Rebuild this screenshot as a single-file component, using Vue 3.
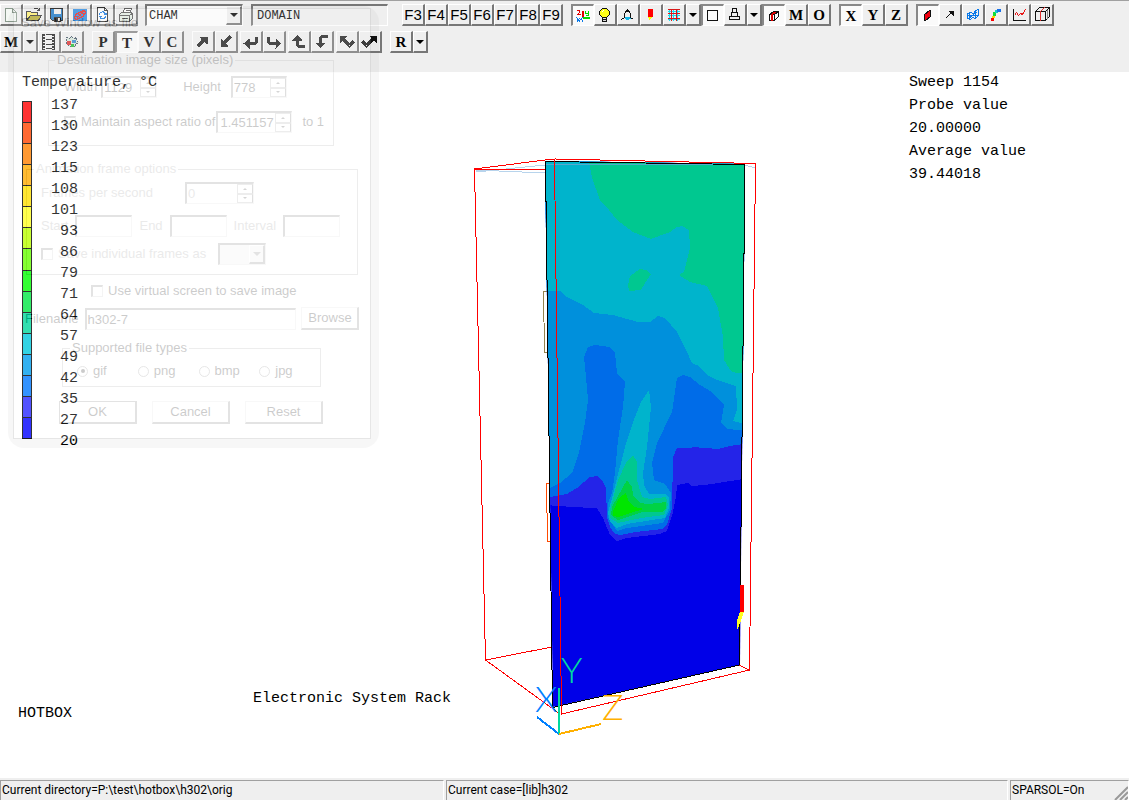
<script setup>
const I = {
  blank: '<path d="M3 2h7l4 4v9H3z" fill="#f4f8f4" stroke="#8a9a8d"/><path d="M10 2v4h4" fill="none" stroke="#8a9a8d"/>',
  open: '<path d="M1 5h4l1 1h6v3H5l-4 5z" fill="#ffef70" stroke="#333"/><path d="M5 9h11l-3 5H1z" fill="#b5aa30" stroke="#333"/><path d="M8 3c2-2 4-2 6 1M14 1v3h-3" fill="none" stroke="#333"/>',
  save: '<path d="M2 2h12v12H4l-2-2z" fill="#1b78c8" stroke="#222"/><path d="M5 2h7v5H5z" fill="#eee"/><path d="M5 10h7v5H5z" fill="#222"/><path d="M9 11h2v3H9z" fill="#eee"/>',
  image: '<path d="M1 2h14v12H1z" fill="#2d8be0"/><path d="M3 12l1-4 8-4 2 1-1 4-8 4zM4 9l3 2M6 7l4 3M9 6l4 2M5 12l7-7" fill="none" stroke="#e02828"/>',
  refresh: '<path d="M3 1h7l3 3v11H3z" fill="#fff" stroke="#333"/><path d="M10 1v3h3" fill="none" stroke="#333"/><path d="M5 8c0-3 5-4 6 0M11 9c0 4-5 4-6 1M9 8h3V6M4 10h3" fill="none" stroke="#1878e0"/>',
  print: '<path d="M5 7l2-5h7l-2 5" fill="#fff" stroke="#555"/><path d="M2 8l2-2h10l1 2v4l-3 3H2z" fill="#e4eee4" stroke="#555"/><path d="M2 9h10v6M12 9l3-2M4 12h6M8 4h4" fill="none" stroke="#555"/>',
  axes: '<path d="M2 3h3v2L3 7h3" fill="none" stroke="#e00000"/><path d="M8 3v7" stroke="#e00000" stroke-width="2"/><path d="M8 10h7" stroke="#00d800" stroke-width="2"/><path d="M11 3v3h3M14 3v5h-3" fill="none" stroke="#00d800"/><path d="M8 10l-4 4M2 10l4 5M2 15l3-4M7 12l2 3" fill="none" stroke="#0878e8"/>',
  bulb: '<path d="M6 2h4l3 3v3l-3 3H6L3 8V5z" fill="#ffff18" stroke="#111"/><path d="M6 11h4v4H6zM6 13h4" fill="#ddd" stroke="#111"/><path d="M5 6l2-2" stroke="#fff"/>',
  probeview: '<path d="M8 2v3M8 3L5 7v4l-3 2M8 3l3 4v4l3 2" fill="none" stroke="#111"/><path d="M6 10h4l1 2-3 2-3-2z" fill="#18b8e8"/>',
  probe: '<path d="M5 2h5v8H5z" fill="#f00"/><path d="M5 10h5l-3 3z" fill="#ff0"/>',
  grid: '<path d="M2 5h12M2 9h12M2 13h12M4 2v12M8 2v12M12 2v12" stroke="#18dff0" fill="none"/><path d="M2 3h12M2 7h12M2 12h12M6 2v12M11 2v12" stroke="#d81818" fill="none"/>',
  square: '<path d="M3 3h10v10H3z" fill="none" stroke="#111"/>',
  camera: '<path d="M6 2h4v4H6zM5 6h6v4H5zM3 10h10v3H3z" fill="none" stroke="#111"/>',
  cube: '<path d="M4 7l4-3h5v5l-4 4H4zM4 7h5v6M9 7l4-3" fill="none" stroke="#111"/><path d="M6 13V7l4-3M7 13V7l4-3" fill="none" stroke="#e00000"/>',
  slice: '<path d="M5 7l5-4h1v6l-5 4H5z" fill="#f00010" stroke="#111"/>',
  vector: '<path d="M4 12l6-6" stroke="#111"/><path d="M6 4h6v6l-2-2z" fill="#111"/>',
  iso: '<path d="M3 7l3-1 3 1 2-3 3-1v6l-3 3-3-1-2 2-3-1zM3 9h11M5 6v7M8 7l4 4M11 4v8M4 12l9-7" fill="none" stroke="#0878e8"/>',
  stream: '<path d="M3 14h3v-3H3z" fill="#f00"/><path d="M4 11h3V9H4z" fill="#ffd000"/><path d="M5 9h3V5H5z" fill="#12dc35"/><path d="M7 6h3V3H7z" fill="#10ccc8"/><path d="M9 2h4v3H9z" fill="#1870e8"/>',
  graph: '<path d="M3 2v12h12" fill="none" stroke="#111"/><path d="M4 9l2-3 2 3 2-2 2 1 3-5" fill="none" stroke="#e81818"/>',
  box: '<path d="M2 5l4-4h10v9l-4 4H2zM2 5h10v9M12 5l4-4" fill="none" stroke="#111"/><path d="M7 14V5l4-4" fill="none" stroke="#e03030"/><path d="M14 3v9" stroke="#888"/>',
  film: '<path d="M3 0v16M13 0v16" stroke="#222" stroke-width="3" stroke-dasharray="2 1"/><path d="M2 0v16M14 0v16M5 1h6M5 6h6M5 11h6M5 15h6" stroke="#222"/>',
  anim: '<path d="M3 4l3 1 2-2 3 2 2-1v3l2 2-3 2v2H6l-3-3z" fill="#d7e6da" stroke="#456" stroke-dasharray="2 1"/><path d="M3 7h4v4H3z" fill="#d33"/><path d="M8 6h4v3H8z" fill="#38c"/><path d="M7 10h3v3H7z" fill="#2b3"/>',
  ne: '<path d="M3 13l7-7" stroke="#222" stroke-width="3"/><path d="M5 3h8v8l-3-2-3-3z" fill="#222"/>',
  sw: '<path d="M13 3l-7 7" stroke="#222" stroke-width="3"/><path d="M3 5v8h8l-2-3z" fill="#222"/>',
  left: '<path d="M14 3v4q0 3-3 3H5" fill="none" stroke="#222" stroke-width="3"/><path d="M1 10l6-5v10z" fill="#222"/>',
  right: '<path d="M3 3v4q0 3 3 3h6" fill="none" stroke="#222" stroke-width="3"/><path d="M16 10l-6-5v10z" fill="#222"/>',
  up: '<path d="M7 5v6q0 2 3 2h4" fill="none" stroke="#222" stroke-width="3"/><path d="M7 1l5 6H2z" fill="#222"/>',
  down: '<path d="M14 3h-4q-3 0-3 3v5" fill="none" stroke="#222" stroke-width="3"/><path d="M7 15l5-6H2z" fill="#222"/>',
  nw: '<path d="M4 5l7 7 4-4" fill="none" stroke="#222" stroke-width="3"/><path d="M1 2h8L1 10z" fill="#222"/>',
  neb: '<path d="M1 8l4 4 7-7" fill="none" stroke="#111" stroke-width="3"/><path d="M7 2h8v8z" fill="#111"/>',
}
const icon = (k, label, down) => ({ k, label, down })
const text = (t, down, thin) => ({ t, label: t, down, thin })
const drop = (label) => ({ drop: true, label })

const fileTools = [icon('blank', 'New'), icon('open', 'Open'), icon('save', 'Save'), icon('image', 'Save window'), icon('refresh', 'Reload'), icon('print', 'Print')]
const topGroups = [
  ['F3', 'F4', 'F5', 'F6', 'F7', 'F8', 'F9'].map((t) => text(t, false, true)),
  [icon('axes', 'Axes', true), icon('bulb', 'Light'), icon('probeview', 'View'), icon('probe', 'Probe'), icon('grid', 'Grid'), drop('Grid options'), icon('square', 'Frame', true), icon('camera', 'Objects'), drop('Object options'), icon('cube', 'Domain', true), text('M'), text('O')],
  [text('X', true), text('Y'), text('Z')],
  [icon('slice', 'Contours', true), icon('vector', 'Vectors'), icon('iso', 'Surface'), icon('stream', 'Streamlines'), icon('graph', 'Graph'), icon('box', 'Slice')],
]
const lowGroups = [
  [text('M'), drop('Macro options'), icon('film', 'Film'), icon('anim', 'Animate')],
  [text('P'), text('T', true), text('V'), text('C')],
  [icon('ne', 'Away'), icon('sw', 'Towards')],
  [icon('left', 'Turn left'), icon('right', 'Turn right')],
  [icon('up', 'Tilt up'), icon('down', 'Tilt down')],
  [icon('nw', 'Roll left'), icon('neb', 'Roll right')],
  [text('R'), drop('Reset options')],
]
const levels = [137, 130, 123, 115, 108, 101, 93, 86, 79, 71, 64, 57, 49, 42, 35, 27, 20]
const colours = ['#ff0000', '#ff4400', '#ff8000', '#ffaa00', '#ffe000', '#ffff22', '#bbff00', '#66ff00', '#00ff00', '#00e844', '#00d89c', '#00c8dc', '#009eee', '#0078ff', '#2828ff', '#0000ff']
const types = ['gif', 'png', 'bmp', 'jpg']
</script>

<template>
  <div class="app">
    <header class="toolbar">
      <div class="row">
        <div class="group">
          <button v-for="b in fileTools" :key="b.k" class="tool" :aria-label="b.label"><svg class="ico" viewBox="-0.5 -0.5 18 17" v-html="I[b.k]"></svg></button>
        </div>
        <div class="combo">
          <select aria-label="Model"><option>CHAM</option></select>
          <span class="arrowbox"><i class="tri"></i></span>
        </div>
        <input class="domain" aria-label="Object" value="DOMAIN" />
        <div v-for="(g, i) in topGroups" :key="i" class="group">
          <button v-for="b in g" :key="b.label" class="tool" :class="{ drop: b.drop, down: b.down, thin: b.thin }" :aria-label="b.label">
            <i v-if="b.drop" class="tri"></i>
            <template v-else-if="b.t">{{ b.t }}</template>
            <svg v-else class="ico" viewBox="-0.5 -0.5 18 17" v-html="I[b.k]"></svg>
          </button>
        </div>
      </div>
      <div class="row low">
        <div v-for="(g, i) in lowGroups" :key="i" class="group">
          <button v-for="b in g" :key="b.label" class="tool" :class="{ drop: b.drop, down: b.down }" :aria-label="b.label">
            <i v-if="b.drop" class="tri"></i>
            <template v-else-if="b.t">{{ b.t }}</template>
            <svg v-else class="ico" viewBox="-0.5 -0.5 18 17" v-html="I[b.k]"></svg>
          </button>
        </div>
      </div>
    </header>

    <main class="view">
      <section class="side">
        <div class="key-title">Temperature, °C</div>
        <div class="key">
          <div class="bar"><span v-for="c in colours" :key="c" :style="{ background: c }"></span></div>
          <ol class="levels"><li v-for="n in levels" :key="n">{{ n }}</li></ol>
        </div>
        <div class="caption">Electronic System Rack</div>
        <div class="case">HOTBOX</div>
      </section>

      <svg class="plot" viewBox="460 150 310 600" role="img" aria-label="Temperature contours">
        <defs><clipPath id="slice"><path d="M545 161L745 164L740 665L553 707z" /></clipPath></defs>
        <g fill="none" shape-rendering="crispEdges">
          <path d="M476 172L545 165M476 170L545 173" stroke="#b8d4ec" />
          <path d="M474.500 169L545 160M474.500 169H545M474.500 169L485.500 660L552 647M485.500 660L560 714" stroke="#f00" />
          <path d="M549 291H543.500L544.500 352H548" stroke="#94824e" />
          <path d="M550 483H546.500L547.500 541H551" stroke="#ff4a00" />
        </g>
        <g clip-path="url(#slice)" shape-rendering="crispEdges">
          <path fill="#0000e8" d="M540 150h220v570H540z" />
          <path fill="#2424e8" d="M540 150V505L563 506 569 507 597 508 603 518 610 535 617 541 627 538 660 534 667 531 673 512 676 497 677 485 688 483 691 486 705 485 750 478V150z" />
          <path fill="#006ce8" d="M540 150V499L567 494 577 488 590 477 597 476 603 482 606 488 607 517 610 527 615 534 620 535 635 532 662 529 667 525 672 508 673 457 677 448 690 448 693 447 718 449 730 446 750 443V150z" />
          <path fill="#0090dc" d="M540 150V490L550 488 560 483 572 473 579 453 585 423 588 400 586 377 584 357 588 347 595 345 610 347 615 353 617 373 625 382 623 407 618 440 615 473 612 493 608 503 608 517 617 531 627 528 663 523 670 510 671 493 665 484 654 480 652 463 657 443 672 412 677 378 683 375 690 377 700 385 712 392 724 405 721 423 727 429 750 431V150z" />
          <path fill="#00b4cc" d="M540 150V291H561L565 296 583 305 594 313 613 315 638 322H650L658 316 665 318 677 332 686 350 692 363 699 366 707 375 717 380 736 386 737 410 733 421 750 425V150zM649 390L651 407 647 447 643 473 644 485 649 494H665L669 498V508L665 518 627 524 617 528 610 522 608 513 614 490 625 447 633 422 641 402z" />
          <path fill="#00c890" d="M589 150V162L592 178 600 200 609 210 617 220 633 232 651 239 670 232 677 227 682 226 689 230 690 248 684 272 679 275 690 282 707 286 718 308 723 337 724 360 731 371 736 373H750V150zM630 276L640 269 646 270 651 274 645 283 641 290 629 291 628 285zM633 455L637 462V480L642 497 650 499 666 497 668 505 664 515 641 518 618 523 610 518V510L618 480 626 463z" />
          <path fill="#00d244" d="M627 480L632 487 633 495 640 503 648 504 666 502V508L662 512 643 512 618 520 611 515 612 507z" />
          <path fill="#00e600" d="M626 493L628 500 634 507 644 509 627 514 618 517 613 516V511L619 498z" />
          <path d="M545 164H745" stroke="#58a7cd" />
        </g>
        <g fill="none" shape-rendering="crispEdges">
          <path d="M545.500 161.500L745 164.500 739.500 665 552.500 707.500z" stroke="#000" />
          <path d="M745 165L755 168" stroke="#b8d4ec" />
          <path d="M545 160L555 159 755.500 163.500 749.500 670 561.500 714 554.500 160M739 665L749 670" stroke="#f00" />
          <path d="M742 585V612" stroke="#f00" stroke-width="4" />
          <path d="M740 612h4l-3 9-4 9v-9z" fill="#ffff20" />
          <path d="M537 717L559 734" stroke="#0080ff" stroke-width="2" />
          <path d="M559 688V734" stroke="#00d8a0" stroke-width="2" />
          <path d="M559 734L601 724" stroke="#ffb000" stroke-width="2" />
        </g>
        <g class="axis">
          <text x="535" y="712" fill="#0080ff">X</text>
          <text x="561" y="683" fill="#00d8a0">Y</text>
          <text x="602" y="720" fill="#ffb000">Z</text>
        </g>
      </svg>

      <section class="info">
        <div>Sweep 1154</div><div>Probe value</div><div>20.00000</div><div>Average value</div><div>39.44018</div>
      </section>
    </main>

    <footer class="status">
      <div class="cell path">Current directory=P:\test\hotbox\h302\orig</div>
      <div class="cell name">Current case=[lib]h302</div>
      <div class="cell solver">SPARSOL=On<svg class="grip" viewBox="0 0 14 14"><path d="M1 14L14 1M6 14L14 6M11 14L14 11" stroke="#999" stroke-width="2" /></svg></div>
    </footer>

    <form class="dialog" @submit.prevent>
      <div class="window">
        <h2>Save Window as file</h2>
        <fieldset class="dest">
          <legend>Destination image size (pixels)</legend>
          <div class="line">
            <label for="w">Width</label><span class="spin sw"><input id="w" value="1129" /><b><i></i><i></i></b></span>
            <label for="h" class="height">Height</label><span class="spin sw"><input id="h" value="778" /><b><i></i><i></i></b></span>
          </div>
          <div class="line second">
            <input id="ar" class="check" type="checkbox" checked /><label for="ar">Maintain aspect ratio of</label>
            <span class="spin ratio"><input aria-label="Aspect ratio" value="1.451157" /><b><i></i><i></i></b></span><span class="to">to 1</span>
          </div>
        </fieldset>
        <fieldset class="anim">
          <legend>Animation frame options</legend>
          <div class="line"><label for="fps" class="fps">Frames per second</label><span class="spin fp"><input id="fps" value="0" /><b><i></i><i></i></b></span></div>
          <div class="line range">
            <label for="st">Start</label><input id="st" class="box" /><label for="en">End</label><input id="en" class="box" /><label for="iv">Interval</label><input id="iv" class="box" />
          </div>
          <div class="line frames"><input id="sv" class="check" type="checkbox" /><label for="sv">Save individual frames as</label>
            <span class="mini"><select aria-label="Frame type"><option></option></select><span class="arrowbox"><i class="tri"></i></span></span></div>
        </fieldset>
        <div class="line virtual"><input id="vs" class="check" type="checkbox" /><label for="vs">Use virtual screen to save image</label></div>
        <div class="line file"><label for="fn">Filename</label><input id="fn" class="box" value="h302-7" /><button>Browse</button></div>
        <fieldset class="types">
          <legend>Supported file types</legend>
          <div class="line"><label v-for="(t, i) in types" :key="t"><input class="radio" type="radio" name="type" :checked="i === 0" />{{ t }}</label></div>
        </fieldset>
        <div class="line actions"><button class="ok">OK</button><button>Cancel</button><button>Reset</button></div>
      </div>
    </form>
  </div>
</template>

<style>
body { margin: 0; background: #fff; }
</style>

<style scoped>
* { box-sizing: border-box; }
.app { position: relative; min-height: 100vh; display: flex; flex-direction: column; overflow: hidden; color: #000; font-family: "Liberation Sans", sans-serif; }
button, input, select { font: inherit; color: inherit; border-radius: 0; appearance: none; margin: 0; padding: 0; }
.toolbar { background: #efefef; border-top: 1px solid #a0a0a0; height: 72px; padding-top: 3px; flex: none; }
.row { display: flex; height: 22px; gap: 8px; }
.row.low { margin-top: 5px; gap: 2px; }
.row.low .group:nth-child(-n+2), .row.low .group:nth-child(6) { margin-right: 6px; }
.group { display: flex; flex: none; }
.tool { width: 23px; height: 22px; display: flex; align-items: center; justify-content: center; background: #efefef; border: solid; border-width: 1px 2px 2px 1px; border-color: #fff #777 #777 #fff; font: bold 15px "Liberation Serif", serif; line-height: 18px; }
.tool.thin { font: 15px "Liberation Sans", sans-serif; line-height: 18px; }
.tool.down { background: #fafafa; border-width: 2px 1px 1px 2px; border-color: #888 #fff #fff #888; }
.tool.drop { width: 15px; }
.ico { width: 18px; height: 17px; flex: none; shape-rendering: crispEdges; }
.tri { width: 0; height: 0; flex: none; border: 4px solid transparent; border-top-color: #000; border-bottom: 0; }
.combo { position: relative; width: 98px; margin-left: -1px; flex: none; }
.combo select, .domain { height: 22px; border: solid; border-width: 2px 1px 1px 2px; border-color: #777 #fff #fff #777; font: 12px "Liberation Mono", monospace; }
.combo select { width: 98px; padding-left: 2px; background: #fff; }
.arrowbox { position: absolute; right: 1px; top: 2px; bottom: 1px; width: 16px; display: flex; align-items: center; justify-content: center; background: #efefef; border: solid; border-width: 1px 2px 2px 1px; border-color: #fff #777 #777 #fff; pointer-events: none; }
.domain { width: 137px; padding-left: 4px; margin-right: 6px; background: #efefef; flex: none; }

.view { flex: 1; display: flex; background: #fff; font: 15px/24px "Liberation Mono", monospace; }
.side { width: 460px; flex: none; display: flex; flex-direction: column; }
.key-title { padding-left: 22px; line-height: 22px; }
.key { display: flex; padding-left: 22px; }
.bar { width: 10px; height: 338px; margin-top: 7px; border: 1px solid #000; display: flex; flex-direction: column; }
.bar span { flex: 1; border-bottom: 1px solid #000; }
.bar span:last-child { border-bottom: 0; }
.levels { list-style: none; margin: 1px 0 0; padding: 0; width: 46px; text-align: right; line-height: 21px; }
.caption { margin-top: auto; padding-right: 9px; text-align: right; line-height: 15px; }
.case { padding-left: 18px; line-height: 15px; margin-bottom: 57px; }
.plot { width: 310px; height: 600px; margin-top: 78px; flex: none; }
.axis { font: 300 36px Lato, sans-serif; }
.info { margin-left: 139px; margin-top: -1px; line-height: 23px; white-space: nowrap; }

.status { height: 22px; flex: none; display: flex; gap: 2px; background: #efefef; padding-top: 2px; font: 12px/18px Roboto, sans-serif; }
.cell { border: solid; border-width: 1px 1px 0 1px; border-color: #a0a0a0 #fff #fff #a0a0a0; padding-left: 1px; white-space: nowrap; position: relative; }
.path { width: 444px; }
.name { flex: 1; }
.solver { width: 119px; }
.grip { position: absolute; right: 0; bottom: 0; width: 14px; height: 14px; }

.dialog { position: absolute; left: 8px; top: 6px; width: 371px; height: 442px; padding: 2px 8px 9px 5px; border-radius: 16px; opacity: 0.2; box-shadow: inset 0 0 0 11px rgba(0, 0, 0, 0.15); font-size: 13px; line-height: 16px; pointer-events: none; }
.window { height: 431px; border: 1px solid #888; background: linear-gradient(#efefef 64px, #fff 64px); display: flow-root; }
h2 { margin: 6px 0 21px 7px; font-size: 13px; line-height: 16px; font-weight: 400; }
fieldset { margin: 0; padding: 0; min-width: 0; border: 1px solid #aaa; }
legend { padding: 0 2px; margin-left: 7px; }
.line { display: flex; align-items: center; }
.dest { margin-left: 34px; width: 286px; height: 94px; }
.dest legend { margin-left: 6px; }
.dest .line { padding-left: 15px; margin-top: 8px; }
.dest .line.second { margin-top: 13px; }
.spin { display: flex; height: 22px; border: solid; border-width: 2px 1px 1px 2px; border-color: #777 #ddd #ddd #777; }
.spin input { border: 0; background: none; width: 0; flex: 1; padding-left: 1px; outline: 0; }
.spin b { width: 16px; display: flex; flex-direction: column; }
.spin i { flex: 1; border: 1px solid #aaa; border-right-color: #666; display: flex; align-items: center; justify-content: center; }
.spin i::after { content: ""; border: 2px solid transparent; border-top: 0; border-bottom-color: #333; }
.spin i + i::after { transform: rotate(180deg); }
.sw { width: 56px; margin-left: 4px; }
.height { margin-left: 26px; }
.height + .sw { margin-left: 10px; }
.check { width: 12px; height: 12px; border: solid; border-width: 2px 1px 1px 2px; border-color: #777 #ccc #ccc #777; margin-right: 5px; }
.check:checked::after { content: "✓"; display: block; font-size: 10px; line-height: 9px; }
.ratio { width: 76px; margin-left: 1px; }
.ratio input { padding-left: 2px; }
.to { margin-left: 10px; }
.anim { margin: 15px 0 0 12px; width: 332px; height: 114px; color: #999; }
.anim .line { padding-left: 14px; margin-top: 5px; }
.anim .range { margin-top: 11px; gap: 7px; }
.range .box { width: 57px; }
.box { height: 22px; border: solid; border-width: 2px 1px 1px 2px; border-color: #777 #ddd #ddd #777; background: #fff; }
.anim .frames { margin-top: 6px; }
.fps { width: 144px; }
.fp { width: 69px; }
.mini { position: relative; margin-left: 12px; }
.mini select { display: block; width: 48px; height: 22px; border: solid; border-width: 2px 1px 1px 2px; border-color: #777 #ddd #ddd #777; }
.mini .tri { border-top-color: #777; }
.virtual { margin: 8px 0 0 77px; }
.file { margin: 8px 0 0 11px; }
.file .box { width: 211px; margin-left: 7px; }
button { text-align: center; }
.line button { height: 23px; width: 78px; background: #fff; border: solid; border-width: 1px 2px 2px 1px; border-color: #ddd #777 #777 #ddd; }
.file button { width: 58px; margin-left: 5px; }
.types { margin: 10px 0 0 48px; width: 259px; height: 47px; }
.types .line { margin: 7px 0 0 14px; }
.types label { width: 62px; display: flex; align-items: center; }
.radio { width: 11px; height: 11px; border: 1px solid #888; border-radius: 50%; margin-right: 5px; display: flex; align-items: center; justify-content: center; }
.radio:checked::after { content: ""; width: 4px; height: 4px; border-radius: 50%; background: #000; }
.actions { margin: 14px 0 0 45px; gap: 15px; }
.line .ok { border-color: #777; }
</style>
